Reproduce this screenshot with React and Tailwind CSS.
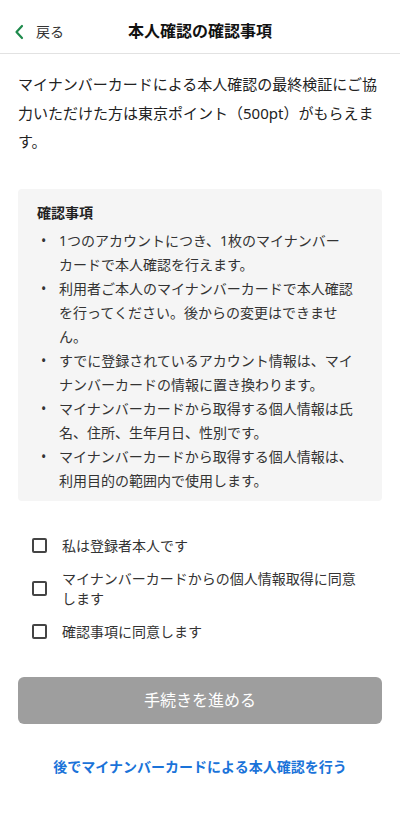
import { useState } from 'react';

// line breaks in the first note are fixed so "カード" moves down as a word
const notes = [
  '1つのアカウントにつき、1枚のマイナンバー\nカードで本人確認を行えます。',
  '利用者ご本人のマイナンバーカードで本人確認を行ってください。後からの変更はできません。',
  'すでに登録されているアカウント情報は、マイナンバーカードの情報に置き換わります。',
  'マイナンバーカードから取得する個人情報は氏名、住所、生年月日、性別です。',
  'マイナンバーカードから取得する個人情報は、利用目的の範囲内で使用します。',
];

const agreements = [
  '私は登録者本人です',
  'マイナンバーカードからの個人情報取得に同意します',
  '確認事項に同意します',
];

const Header = () => (
  <header className="relative flex h-[54px] items-center justify-center border-b border-[#e2e2e2]">
    <button className="absolute left-[13px] top-[21px] flex items-center gap-[10px] text-[14px] text-[#333]">
      <svg width="13" height="16" viewBox="0 0 13 16" fill="none">
        <path d="M9 2 3.5 8 9 14" stroke="#1e8a4c" strokeWidth="2.2" strokeLinecap="round" strokeLinejoin="round" />
      </svg>
      戻る
    </button>
    <h1 className="mt-[9px] text-[16px] font-bold text-[#111]">本人確認の確認事項</h1>
  </header>
);

const CheckRow = ({ label, checked, onToggle }) => (
  <label className="flex cursor-pointer items-center gap-[15px] text-[14px] leading-[20px] text-[#333]">
    <span
      onClick={onToggle}
      className={`h-[15px] w-[15px] shrink-0 rounded-[2px] border-2 border-[#444] ${checked ? 'bg-[#444]' : 'bg-white'}`}
    />
    <span className="pr-4">{label}</span>
  </label>
);

export default function App() {
  const [checked, setChecked] = useState([false, false, false]);
  const ready = checked.every(Boolean);

  const toggle = (i) => setChecked((prev) => prev.map((v, j) => (j === i ? !v : v)));

  return (
    <div
      className="min-h-[819px] w-[400px] bg-white"
      style={{ fontFamily: '"Noto Sans", "Noto Sans CJK JP", sans-serif' }}
    >
      <Header />

      <p className="px-[18px] pt-[16px] text-[15px] leading-[28.5px] text-[#222]">
        マイナンバーカードによる本人確認の最終検証にご協力いただけた方は東京ポイント（500pt）がもらえます。
      </p>

      <section className="mx-[18px] mt-[33px] rounded-[4px] bg-[#f5f5f5] pb-[8px] pl-[19px] pr-[25px] pt-[12px]">
        <h2 className="text-[14px] font-bold leading-[24px] text-[#222]">確認事項</h2>
        <ul className="mt-[4px] text-[14px] leading-[24px] text-[#333]">
          {notes.map((n) => (
            <li key={n} className="flex">
              <span className="w-[22px] shrink-0 pl-[4px]">•</span>
              <span className="whitespace-pre-line">{n}</span>
            </li>
          ))}
        </ul>
      </section>

      <div className="mt-[35px] flex flex-col gap-[13px] pl-[32px] pr-[18px]">
        {agreements.map((a, i) => (
          <CheckRow key={a} label={a} checked={checked[i]} onToggle={() => toggle(i)} />
        ))}
      </div>

      <div className="px-[18px] pt-[35px]">
        <button
          disabled={!ready}
          className={`h-[47px] w-full rounded-[6px] text-[16px] text-white ${ready ? 'bg-[#1e8a4c]' : 'bg-[#9e9e9e]'}`}
        >
          手続きを進める
        </button>
      </div>

      <div className="pt-[30px] text-center">
        <button className="text-[14px] font-bold leading-[20px] text-[#1a73d9]">
          後でマイナンバーカードによる本人確認を行う
        </button>
      </div>
    </div>
  );
}
